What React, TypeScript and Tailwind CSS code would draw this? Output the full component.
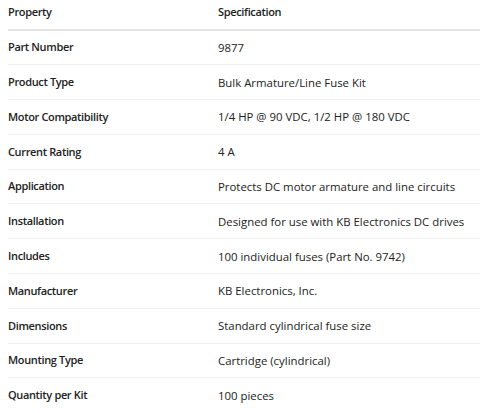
const rows: [string, string][] = [
  ["Part Number", "9877"],
  ["Product Type", "Bulk Armature/Line Fuse Kit"],
  ["Motor Compatibility", "1/4 HP @ 90 VDC, 1/2 HP @ 180 VDC"],
  ["Current Rating", "4 A"],
  ["Application", "Protects DC motor armature and line circuits"],
  ["Installation", "Designed for use with KB Electronics DC drives"],
  ["Includes", "100 individual fuses (Part No. 9742)"],
  ["Manufacturer", "KB Electronics, Inc."],
  ["Dimensions", "Standard cylindrical fuse size"],
  ["Mounting Type", "Cartridge (cylindrical)"],
  ["Quantity per Kit", "100 pieces"],
];

export default function App() {
  return (
    <div className="h-[413px] overflow-hidden bg-white pl-2 font-['Open_Sans',sans-serif] text-[11.4px] text-[#222]">
      <table className="-mt-[5px] w-full border-collapse">
        <thead>
          <tr className="h-[35px] border-b-2 border-[#e5e5e5] text-left">
            <th className="w-[210px] p-0 text-[11px] font-semibold tracking-[-0.35px]">Property</th>
            <th className="p-0 text-[11px] font-semibold tracking-[-0.35px]">Specification</th>
          </tr>
        </thead>
        <tbody>
          {rows.map(([k, v]) => (
            <tr key={k} className="h-[34.8px] border-b border-[#f0f0f0] last:border-b-0">
              <td className="p-0 text-[11px] font-semibold tracking-[-0.35px]">{k}</td>
              <td className="p-0">{v}</td>
            </tr>
          ))}
        </tbody>
      </table>
    </div>
  );
}
